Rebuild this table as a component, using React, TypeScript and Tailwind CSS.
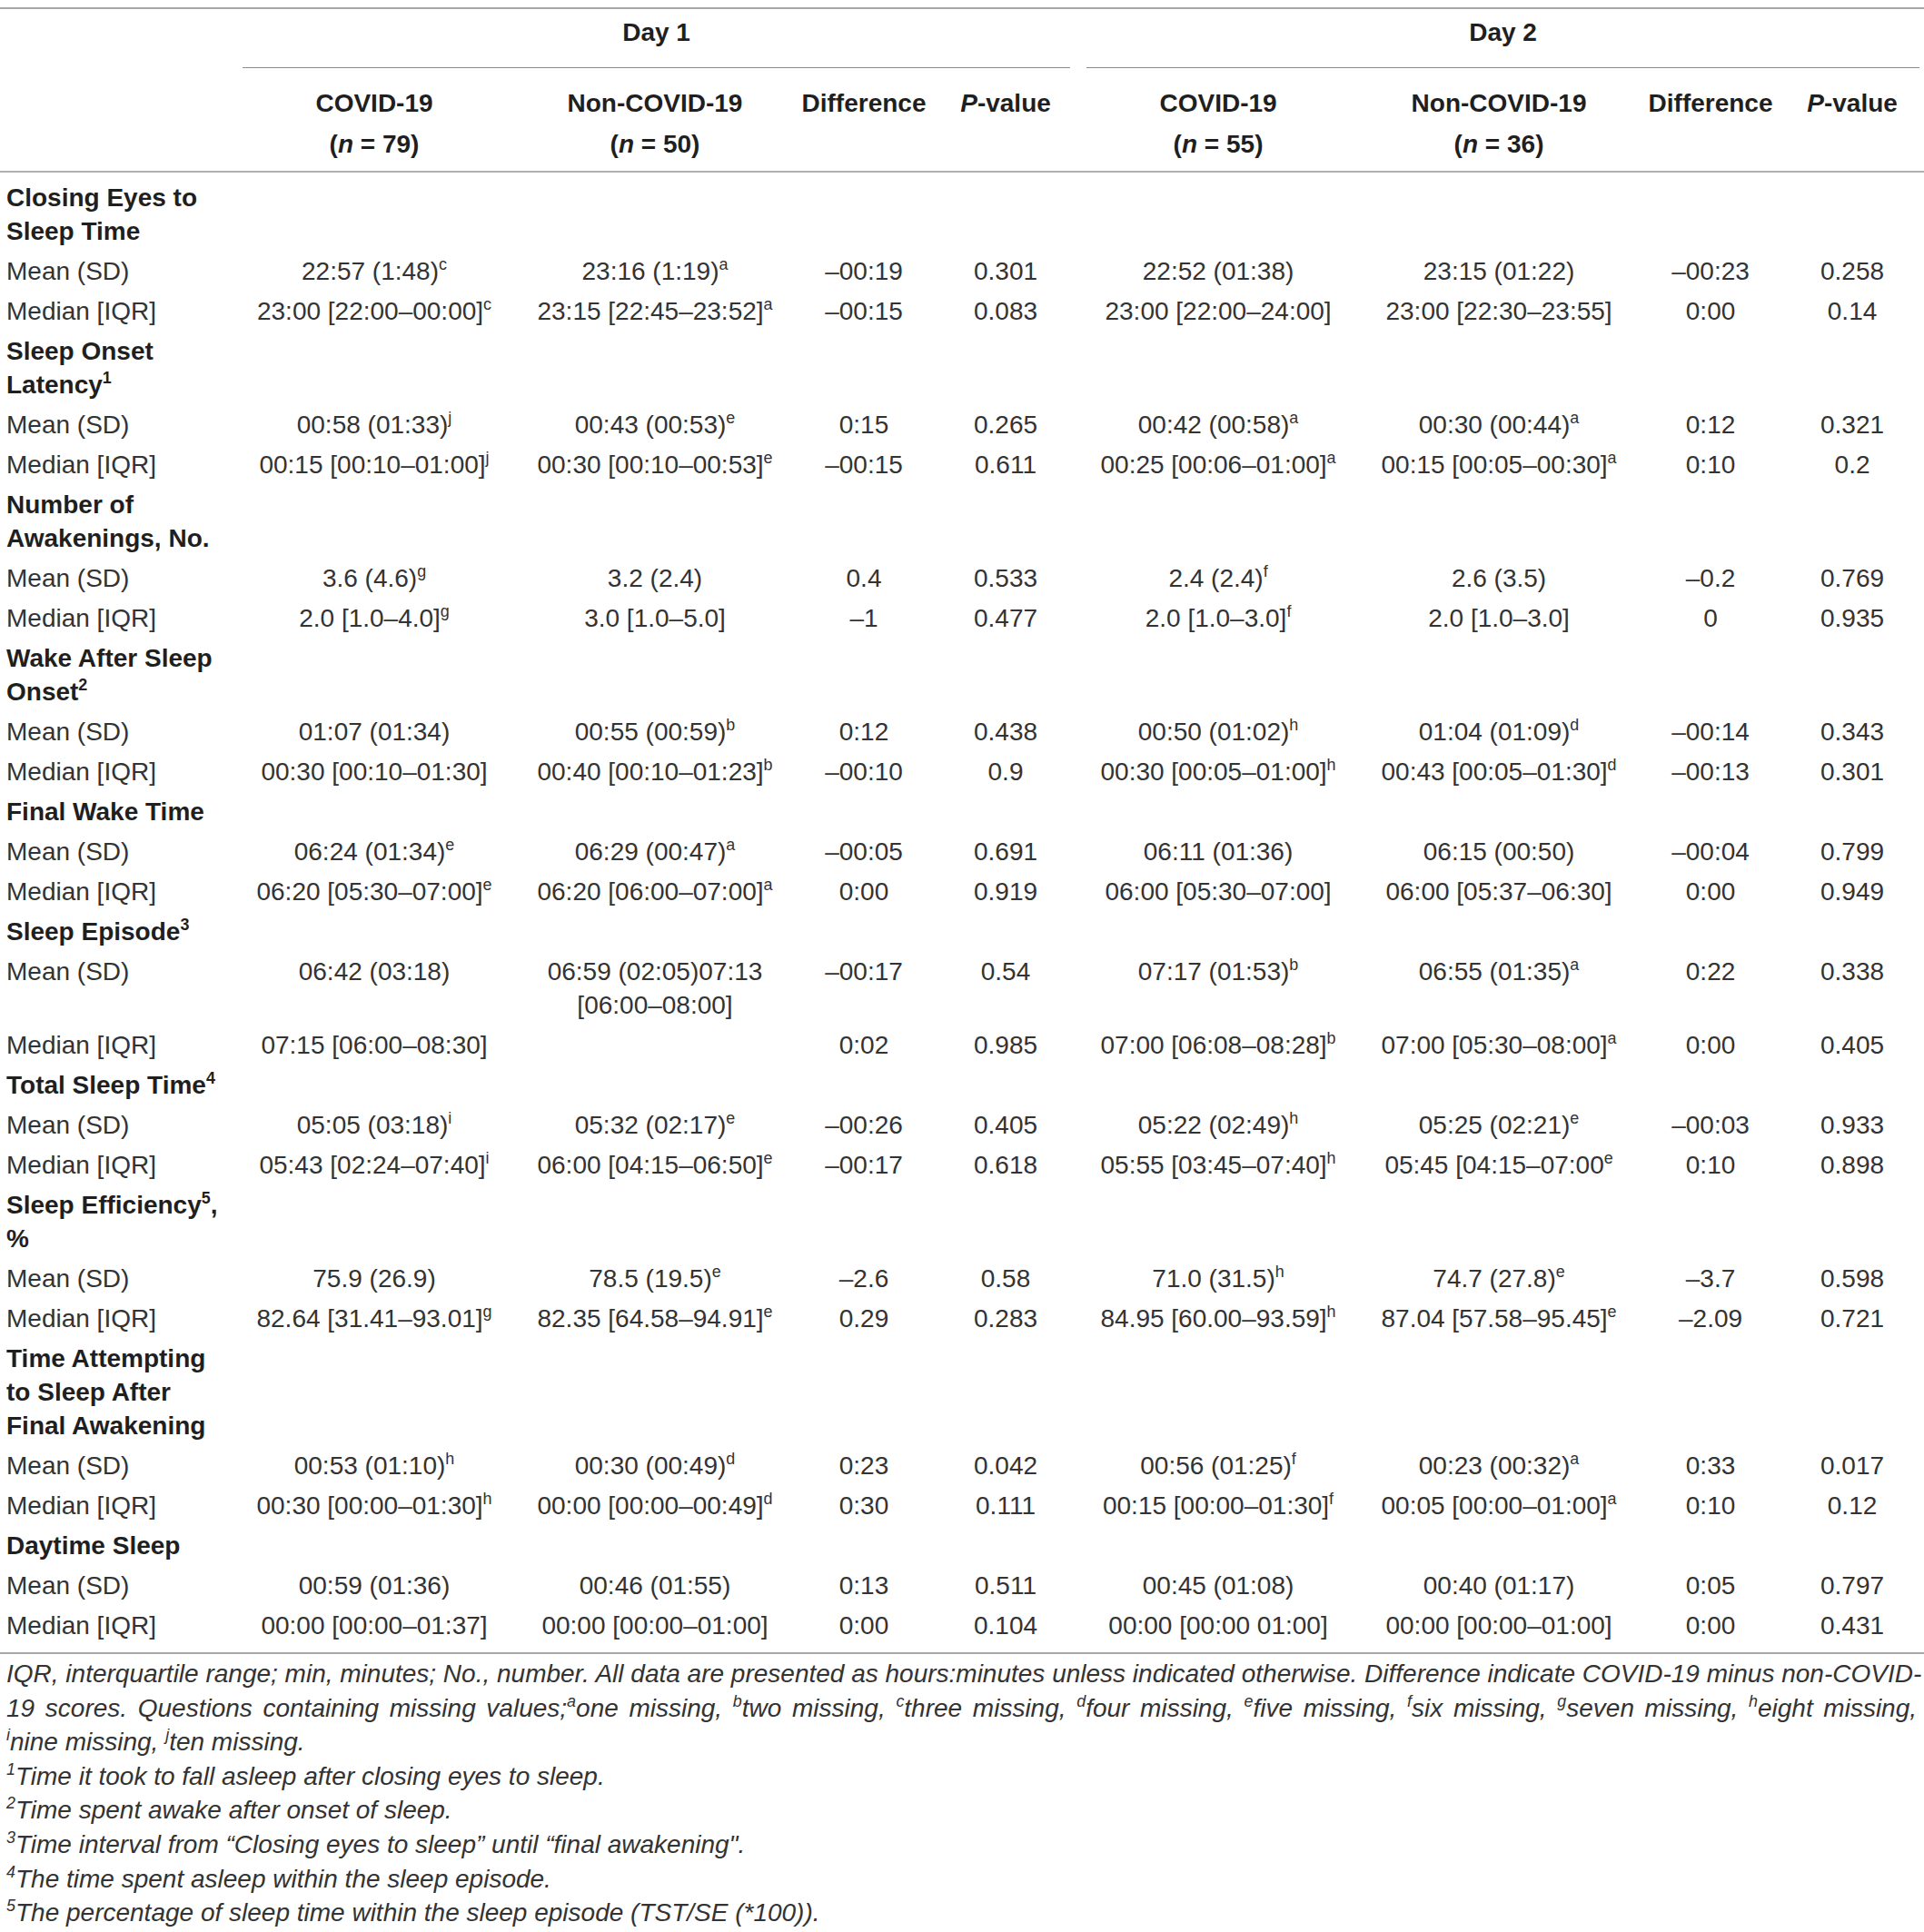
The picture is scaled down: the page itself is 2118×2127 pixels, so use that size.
import React from "react";

// "text^x" → text with superscript x
const Val = ({ v }: { v: string }) => {
  const [text, sup] = v.split("^");
  return (
    <>
      {text}
      {sup && <Sup>{sup}</Sup>}
    </>
  );
};

const Sup = ({ children }: { children: React.ReactNode }) => (
  <sup className="static text-[0.64em] leading-[0] align-[0.62em]">{children}</sup>
);

type Row = (string | string[])[];

const sections: { title: React.ReactNode; rows: Row[] }[] = [
  {
    title: <>Closing Eyes to<br />Sleep Time</>,
    rows: [
      ["Mean (SD)", "22:57 (1:48)^c", "23:16 (1:19)^a", "–00:19", "0.301", "22:52 (01:38)", "23:15 (01:22)", "–00:23", "0.258"],
      ["Median [IQR]", "23:00 [22:00–00:00]^c", "23:15 [22:45–23:52]^a", "–00:15", "0.083", "23:00 [22:00–24:00]", "23:00 [22:30–23:55]", "0:00", "0.14"],
    ],
  },
  {
    title: <>Sleep Onset<br />Latency<Sup>1</Sup></>,
    rows: [
      ["Mean (SD)", "00:58 (01:33)^j", "00:43 (00:53)^e", "0:15", "0.265", "00:42 (00:58)^a", "00:30 (00:44)^a", "0:12", "0.321"],
      ["Median [IQR]", "00:15 [00:10–01:00]^j", "00:30 [00:10–00:53]^e", "–00:15", "0.611", "00:25 [00:06–01:00]^a", "00:15 [00:05–00:30]^a", "0:10", "0.2"],
    ],
  },
  {
    title: <>Number of<br />Awakenings, No.</>,
    rows: [
      ["Mean (SD)", "3.6 (4.6)^g", "3.2 (2.4)", "0.4", "0.533", "2.4 (2.4)^f", "2.6 (3.5)", "–0.2", "0.769"],
      ["Median [IQR]", "2.0 [1.0–4.0]^g", "3.0 [1.0–5.0]", "–1", "0.477", "2.0 [1.0–3.0]^f", "2.0 [1.0–3.0]", "0", "0.935"],
    ],
  },
  {
    title: <>Wake After Sleep<br />Onset<Sup>2</Sup></>,
    rows: [
      ["Mean (SD)", "01:07 (01:34)", "00:55 (00:59)^b", "0:12", "0.438", "00:50 (01:02)^h", "01:04 (01:09)^d", "–00:14", "0.343"],
      ["Median [IQR]", "00:30 [00:10–01:30]", "00:40 [00:10–01:23]^b", "–00:10", "0.9", "00:30 [00:05–01:00]^h", "00:43 [00:05–01:30]^d", "–00:13", "0.301"],
    ],
  },
  {
    title: <>Final Wake Time</>,
    rows: [
      ["Mean (SD)", "06:24 (01:34)^e", "06:29 (00:47)^a", "–00:05", "0.691", "06:11 (01:36)", "06:15 (00:50)", "–00:04", "0.799"],
      ["Median [IQR]", "06:20 [05:30–07:00]^e", "06:20 [06:00–07:00]^a", "0:00", "0.919", "06:00 [05:30–07:00]", "06:00 [05:37–06:30]", "0:00", "0.949"],
    ],
  },
  {
    title: <>Sleep Episode<Sup>3</Sup></>,
    rows: [
      ["Mean (SD)", "06:42 (03:18)", ["06:59 (02:05)07:13", "[06:00–08:00]"], "–00:17", "0.54", "07:17 (01:53)^b", "06:55 (01:35)^a", "0:22", "0.338"],
      ["Median [IQR]", "07:15 [06:00–08:30]", "", "0:02", "0.985", "07:00 [06:08–08:28]^b", "07:00 [05:30–08:00]^a", "0:00", "0.405"],
    ],
  },
  {
    title: <>Total Sleep Time<Sup>4</Sup></>,
    rows: [
      ["Mean (SD)", "05:05 (03:18)^i", "05:32 (02:17)^e", "–00:26", "0.405", "05:22 (02:49)^h", "05:25 (02:21)^e", "–00:03", "0.933"],
      ["Median [IQR]", "05:43 [02:24–07:40]^i", "06:00 [04:15–06:50]^e", "–00:17", "0.618", "05:55 [03:45–07:40]^h", "05:45 [04:15–07:00^e", "0:10", "0.898"],
    ],
  },
  {
    title: <>Sleep Efficiency<Sup>5</Sup>,<br />%</>,
    rows: [
      ["Mean (SD)", "75.9 (26.9)", "78.5 (19.5)^e", "–2.6", "0.58", "71.0 (31.5)^h", "74.7 (27.8)^e", "–3.7", "0.598"],
      ["Median [IQR]", "82.64 [31.41–93.01]^g", "82.35 [64.58–94.91]^e", "0.29", "0.283", "84.95 [60.00–93.59]^h", "87.04 [57.58–95.45]^e", "–2.09", "0.721"],
    ],
  },
  {
    title: <>Time Attempting<br />to Sleep After<br />Final Awakening</>,
    rows: [
      ["Mean (SD)", "00:53 (01:10)^h", "00:30 (00:49)^d", "0:23", "0.042", "00:56 (01:25)^f", "00:23 (00:32)^a", "0:33", "0.017"],
      ["Median [IQR]", "00:30 [00:00–01:30]^h", "00:00 [00:00–00:49]^d", "0:30", "0.111", "00:15 [00:00–01:30]^f", "00:05 [00:00–01:00]^a", "0:10", "0.12"],
    ],
  },
  {
    title: <>Daytime Sleep</>,
    rows: [
      ["Mean (SD)", "00:59 (01:36)", "00:46 (01:55)", "0:13", "0.511", "00:45 (01:08)", "00:40 (01:17)", "0:05", "0.797"],
      ["Median [IQR]", "00:00 [00:00–01:37]", "00:00 [00:00–01:00]", "0:00", "0.104", "00:00 [00:00 01:00]", "00:00 [00:00–01:00]", "0:00", "0.431"],
    ],
  },
];

const groups = [
  { n1: "79", n2: "50" },
  { n1: "55", n2: "36" },
];

const cell = "py-[3.5px] leading-[37px] align-top whitespace-nowrap";

const App: React.FC = () => {
  return (
    <div className="min-h-screen bg-white pt-[8px] text-[28px] text-[#333333] font-['Liberation_Sans',Arial,sans-serif]">
      <table className="w-[2118px] table-fixed border-collapse border-t-2 border-b-2 border-[#a8a8a8]">
        <colgroup>
          <col className="w-[258px]" />
          <col className="w-[308px]" />
          <col className="w-[310px]" />
          <col className="w-[150px]" />
          <col className="w-[162px]" />
          <col className="w-[306px]" />
          <col className="w-[312px]" />
          <col className="w-[154px]" />
          <col className="w-[158px]" />
        </colgroup>
        <thead className="font-bold text-[#1f1f1f]">
          <tr>
            <th className="p-0" />
            <th colSpan={4} className="pt-[7px] pl-[9px] pr-[10px] pb-0 leading-[37px]">
              <div className="pb-[20px] border-b border-[#8a8a8a]">Day 1</div>
            </th>
            <th colSpan={4} className="pt-[7px] pl-[8px] pr-[5px] pb-0 leading-[37px]">
              <div className="pb-[20px] border-b border-[#8a8a8a]">Day 2</div>
            </th>
          </tr>
          <tr className="border-b-2 border-[#b0b0b0]">
            <th className="p-0" />
            {groups.map((g, i) => (
              <React.Fragment key={i}>
                <th className="pt-[16px] pb-[7px] leading-[45px] align-top whitespace-nowrap">
                  COVID-19
                  <br />
                  (<i>n</i> = {g.n1})
                </th>
                <th className="pt-[16px] pb-[7px] leading-[45px] align-top whitespace-nowrap">
                  Non-COVID-19
                  <br />
                  (<i>n</i> = {g.n2})
                </th>
                <th className="pt-[16px] pb-[7px] leading-[45px] align-top">Difference</th>
                <th className="pt-[16px] pb-[7px] leading-[45px] align-top">
                  <i>P</i>-value
                </th>
              </React.Fragment>
            ))}
          </tr>
        </thead>
        <tbody>
          <tr>
            <td colSpan={9} className="h-[6px] p-0" />
          </tr>
          {sections.map((s, si) => (
            <React.Fragment key={si}>
              <tr>
                <td colSpan={9} className={`${cell} pl-[7px] text-left font-bold text-[#1f1f1f]`}>
                  {s.title}
                </td>
              </tr>
              {s.rows.map((r, ri) => (
                <tr key={ri}>
                  {r.map((c, ci) => (
                    <td key={ci} className={`${cell} ${ci === 0 ? "pl-[7px] text-left" : "text-center"}`}>
                      {Array.isArray(c) ? (
                        c.map((line, li) => <div key={li}>{line}</div>)
                      ) : (
                        <Val v={c} />
                      )}
                    </td>
                  ))}
                </tr>
              ))}
            </React.Fragment>
          ))}
          <tr>
            <td colSpan={9} className="h-[9px] p-0" />
          </tr>
        </tbody>
      </table>

      <div className="pl-[7px] pr-[8px] pt-[3px] italic leading-[37.6px] text-[#333333]">
        <div className="whitespace-nowrap text-justify [text-align-last:justify]">
          IQR, interquartile range; min, minutes; No., number. All data are presented as hours:minutes unless indicated otherwise. Difference indicate COVID-19 minus non-COVID-
        </div>
        <div className="whitespace-nowrap text-justify [text-align-last:justify]">
          19 scores. Questions containing missing values;<Sup>a</Sup>one missing, <Sup>b</Sup>two missing, <Sup>c</Sup>three missing, <Sup>d</Sup>four missing, <Sup>e</Sup>five missing, <Sup>f</Sup>six missing, <Sup>g</Sup>seven missing, <Sup>h</Sup>eight missing,
        </div>
        <div>
          <Sup>i</Sup>nine missing, <Sup>j</Sup>ten missing.
        </div>
        <div>
          <Sup>1</Sup>Time it took to fall asleep after closing eyes to sleep.
        </div>
        <div>
          <Sup>2</Sup>Time spent awake after onset of sleep.
        </div>
        <div>
          <Sup>3</Sup>Time interval from “Closing eyes to sleep” until “final awakening".
        </div>
        <div>
          <Sup>4</Sup>The time spent asleep within the sleep episode.
        </div>
        <div>
          <Sup>5</Sup>The percentage of sleep time within the sleep episode (TST/SE (*100)).
        </div>
      </div>
    </div>
  );
};

export default App;
